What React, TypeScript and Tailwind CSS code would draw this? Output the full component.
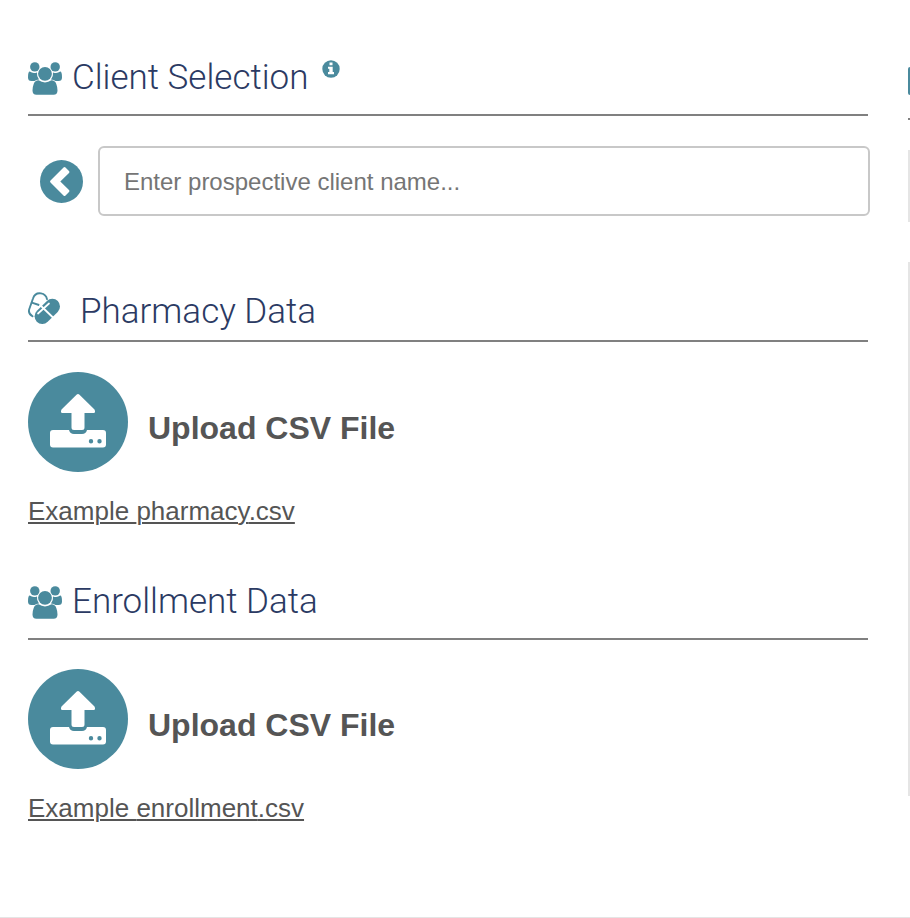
import React from "react";

const users = (
  <svg viewBox="0 0 34 33" className="h-[33px] w-[34px] shrink-0 fill-[#4a8a9d]" aria-hidden="true">
    <circle cx="6.800" cy="4.900" r="4.700" />
    <circle cx="27.200" cy="4.900" r="4.700" />
    <circle cx="17" cy="11.800" r="6.900" />
    <path d="M1.800 9.600Q5 12 9 10.400Q8.500 14.500 11 17.500Q8 17.500 6.500 19H3.500Q0 19 0 15.500Q0 9.600 1.800 9.600Z" />
    <path d="M32.200 9.600Q29 12 25 10.400Q25.500 14.500 23 17.500Q26 17.500 27.500 19H30.500Q34 19 34 15.500Q34 9.600 32.200 9.600Z" />
    <path d="M10.500 18.300Q17 22.500 23.500 18.300Q27 18.300 28.300 22Q29.500 25 29.500 28.500Q29.500 32.700 25.500 32.700H8.500Q4.500 32.700 4.500 28.500Q4.500 25 5.700 22Q7 18.300 10.500 18.300Z" />
  </svg>
);

const pills = (
  <svg viewBox="0 0 32 32" className="h-8 w-8 shrink-0" aria-hidden="true">
    <g fill="none" stroke="#4a8a9d" strokeWidth="1.900" strokeLinecap="round">
      <path d="M4.500 24.300C1.500 22.500 0.300 20 1.300 17L5 6.500C6.300 2.500 9.500 0.900 13 1.400C16.500 2 18.500 4.500 19 7.200" />
      <path d="M3.800 10.700L11 13" />
    </g>
    <path d="M14.300 24.300L24.300 14.500" stroke="#4a8a9d" strokeWidth="15.400" strokeLinecap="round" />
    <g stroke="white" fill="none">
      <path d="M11.500 12.500L26 26.500" strokeWidth="1.800" />
      <path d="M10 21.500L21 11.500" strokeWidth="1.700" strokeLinecap="round" />
    </g>
  </svg>
);

function Heading({ icon, title, className, info }: { icon: React.ReactNode; title: string; className: string; info?: boolean }) {
  return (
    <div className={`flex items-start border-b-2 border-[#808080] ${className}`}>
      {icon}
      <h2 className="font-[Roboto,'Liberation_Sans',sans-serif] text-[35px] leading-10 font-light text-[#2b3a63]">{title}</h2>
      {info && (
        <button type="button" aria-label="About client selection" className="mt-0.5 ml-3.5">
          <svg viewBox="0 0 18 18" className="size-[18px]" aria-hidden="true">
            <circle cx="9" cy="9" r="8.700" fill="#4a8a9d" />
            <path d="M7.500 2.500H10.500V5.200H7.500ZM6 6.800H10.700V12H12V14.200H6V12H7.300V8.800H6Z" fill="white" />
          </svg>
        </button>
      )}
    </div>
  );
}

function Upload({ kind }: { kind: string }) {
  return (
    <>
      <button type="button" className="flex items-center gap-5 text-left">
        <svg viewBox="0 0 100 100" className="size-[100px]" aria-hidden="true">
          <circle cx="50" cy="50" r="50" fill="#4a8a9d" />
          <path d="M48.500 22.700Q50 21.300 51.500 22.700L66.500 37.500Q68 41 65.500 41H56.500V55.500Q56.500 58 54 58H46Q43.500 58 43.500 55.500V41H34.500Q32 41 33.500 37.500Z" fill="white" />
          <path fillRule="evenodd" d="M25 58H41Q42 62 46 62H54Q58 62 59 58H75Q78 58 78 61V72.500Q78 75.500 75 75.500H25Q22 75.500 22 72.500V61Q22 58 25 58ZM63 67A2.200 2.200 0 1 0 63 71.400A2.200 2.200 0 1 0 63 67ZM71.500 67A2.200 2.200 0 1 0 71.500 71.400A2.200 2.200 0 1 0 71.500 67Z" fill="white" />
        </svg>
        <span className="pt-3 text-[32px] leading-10 font-bold text-[#555]">Upload CSV File</span>
      </button>
      <a href={`#${kind}`} className="mt-[23px] self-start text-[26px] leading-8 text-[#555] underline decoration-2 underline-offset-2">
        Example {kind}.csv
      </a>
    </>
  );
}

export default function App() {
  return (
    <div className="flex min-h-screen overflow-hidden border-b border-[#e5e5e5] bg-white font-['Liberation_Sans',Arial,sans-serif]">
      <main className="flex min-w-0 flex-1 flex-col pt-[58px] pr-10 pl-7">
        <Heading icon={<span className="mr-2.5 pt-1">{users}</span>} title="Client Selection" className="h-[58px]" info />
        <form className="mt-[30px] -mr-0.5 flex items-center pl-3" onSubmit={(e) => e.preventDefault()}>
          <button type="button" aria-label="Back" className="mr-[15px] shrink-0">
            <svg viewBox="0 0 43 43" className="size-[43px]" aria-hidden="true">
              <circle cx="21.500" cy="21.500" r="21.500" fill="#4a8a9d" />
              <path d="M23.500 7.500Q24.500 6.500 25.500 7.500L29 11Q30 12 29 13L20.300 21.500L29 30Q30 31 29 32L25.500 35.500Q24.500 36.500 23.500 35.500L10.500 22.500Q9.500 21.500 10.500 20.500Z" fill="white" />
            </svg>
          </button>
          <input
            type="text"
            aria-label="Prospective client name"
            placeholder="Enter prospective client name..."
            className="h-[70px] min-w-0 flex-1 rounded-md border-2 border-[#c8c8c8] px-6 pt-0.5 text-2xl text-[#555] placeholder:text-[#757575]"
          />
        </form>
        <section className="mt-[76px] flex flex-col">
          <Heading icon={<span className="mr-5">{pills}</span>} title="Pharmacy Data" className="h-[50px]" />
          <div className="mt-[30px] flex flex-col">
            <Upload kind="pharmacy" />
          </div>
        </section>
        <section className="mt-[55px] flex flex-col">
          <Heading icon={<span className="mr-2.5 pt-1">{users}</span>} title="Enrollment Data" className="h-[58px]" />
          <div className="mt-[29px] flex flex-col">
            <Upload kind="enrollment" />
          </div>
        </section>
      </main>
      <aside className="w-0.5 shrink-0">
        <div className="mt-[67px] h-7 rounded-l-sm bg-[#4a8a9d]" />
        <div className="mt-[23px] h-0.5 bg-[#808080]" />
        <div className="mt-[30px] h-[72px] bg-[#e5e5e5]" />
        <div className="mt-10 h-[534px] bg-[#e5e5e5]" />
      </aside>
    </div>
  );
}
